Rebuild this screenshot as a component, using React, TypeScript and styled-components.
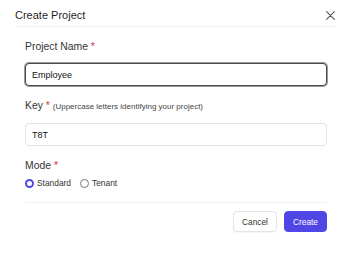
import styled, { createGlobalStyle } from "styled-components";

const GlobalStyle = createGlobalStyle`
  html, body {
    margin: 0;
    padding: 0;
    background: #ffffff;
  }
  body {
    font-family: "Liberation Sans", Arial, sans-serif;
    color: #1f1f1f;
  }
`;

const App = () => {
  return (
    <Modal>
      <GlobalStyle />
      <Header>
        <Title>Create Project</Title>
        <CloseButton aria-label="Close">
          <svg width="9" height="9" viewBox="0 0 9 9">
            <path d="M0.6 0.6L8.4 8.4M8.4 0.6L0.6 8.4" stroke="#555" strokeWidth="1.1" strokeLinecap="round" />
          </svg>
        </CloseButton>
      </Header>
      <Body>
        <Field>
          <Label>
            Project Name <Req>*</Req>
          </Label>
          <Input $focused defaultValue="Employee" />
        </Field>
        <Field>
          <Label>
            Key <Req>*</Req> <Hint>(Uppercase letters identifying your project)</Hint>
          </Label>
          <Input defaultValue="T8T" />
        </Field>
        <Field $tight>
          <Label>
            Mode <Req>*</Req>
          </Label>
          <RadioRow>
            <RadioOption>
              <Radio $checked />
              Standard
            </RadioOption>
            <RadioOption>
              <Radio />
              Tenant
            </RadioOption>
          </RadioRow>
        </Field>
      </Body>
      <Footer>
        <Button>Cancel</Button>
        <Button $primary>Create</Button>
      </Footer>
    </Modal>
  );
};
export default App;

const Modal = styled.div`
  width: 353px;
  height: 253px;
  background: #fff;
  display: flex;
  flex-direction: column;
`;

const Header = styled.div`
  margin: 0 16px 0 15px;
  padding-top: 4px;
  height: 22px;
  border-bottom: 1px solid #efefef;
  display: flex;
  align-items: center;
  justify-content: space-between;
`;

const Title = styled.div`
  font-size: 11px;
  color: #1f1f1f;
`;

const CloseButton = styled.button`
  border: none;
  background: none;
  padding: 0;
  margin-right: 2px;
  display: flex;
  cursor: pointer;
`;

const Body = styled.div`
  padding: 13px 26px 0 25px;
  display: flex;
  flex-direction: column;
  gap: 13px;
`;

const Field = styled.div<{ $tight?: boolean }>`
  display: flex;
  flex-direction: column;
  gap: ${(p) => (p.$tight ? "5px" : "9px")};
`;

const Label = styled.div`
  font-size: 10.4px;
  color: #333;
  line-height: 14px;
  white-space: nowrap;
`;

const Req = styled.span`
  color: #d92d3a;
`;

const Hint = styled.span`
  font-size: 8px;
  color: #444;
`;

const Input = styled.input<{ $focused?: boolean }>`
  box-sizing: border-box;
  width: 100%;
  height: 23px;
  margin: 0;
  border: 1px solid ${(p) => (p.$focused ? "#4a4a4a" : "#e3e3e3")};
  box-shadow: ${(p) => (p.$focused ? "0 0 0 1px #9a9a9a" : "none")};
  border-radius: 4px;
  padding: 0 6px;
  font-family: inherit;
  font-size: 9px;
  color: #111;
  outline: none;
`;

const RadioRow = styled.div`
  display: flex;
  gap: 9px;
  height: 10px;
`;

const RadioOption = styled.label`
  display: flex;
  align-items: center;
  gap: 3px;
  font-size: 8.4px;
  color: #333;
`;

const Radio = styled.span<{ $checked?: boolean }>`
  box-sizing: border-box;
  width: 9px;
  height: 9px;
  border-radius: 50%;
  border: ${(p) => (p.$checked ? "2.6px solid #4f46e5" : "1px solid #777")};
  background: #fff;
`;

const Footer = styled.div`
  margin: 14px 26px 0 25px;
  border-top: 1px solid #efefef;
  padding-top: 8px;
  display: flex;
  justify-content: flex-end;
  gap: 7px;
`;

const Button = styled.button<{ $primary?: boolean }>`
  box-sizing: border-box;
  height: 21px;
  width: ${(p) => (p.$primary ? "43px" : "44px")};
  padding: 0;
  border-radius: 4px;
  font-family: inherit;
  font-size: 8.3px;
  border: 1px solid ${(p) => (p.$primary ? "#4f46e5" : "#e4e4e4")};
  background: ${(p) => (p.$primary ? "#4f46e5" : "#fff")};
  color: ${(p) => (p.$primary ? "#fff" : "#333")};
  box-shadow: ${(p) => (p.$primary ? "none" : "0 1px 1px rgba(0,0,0,0.04)")};
`;
